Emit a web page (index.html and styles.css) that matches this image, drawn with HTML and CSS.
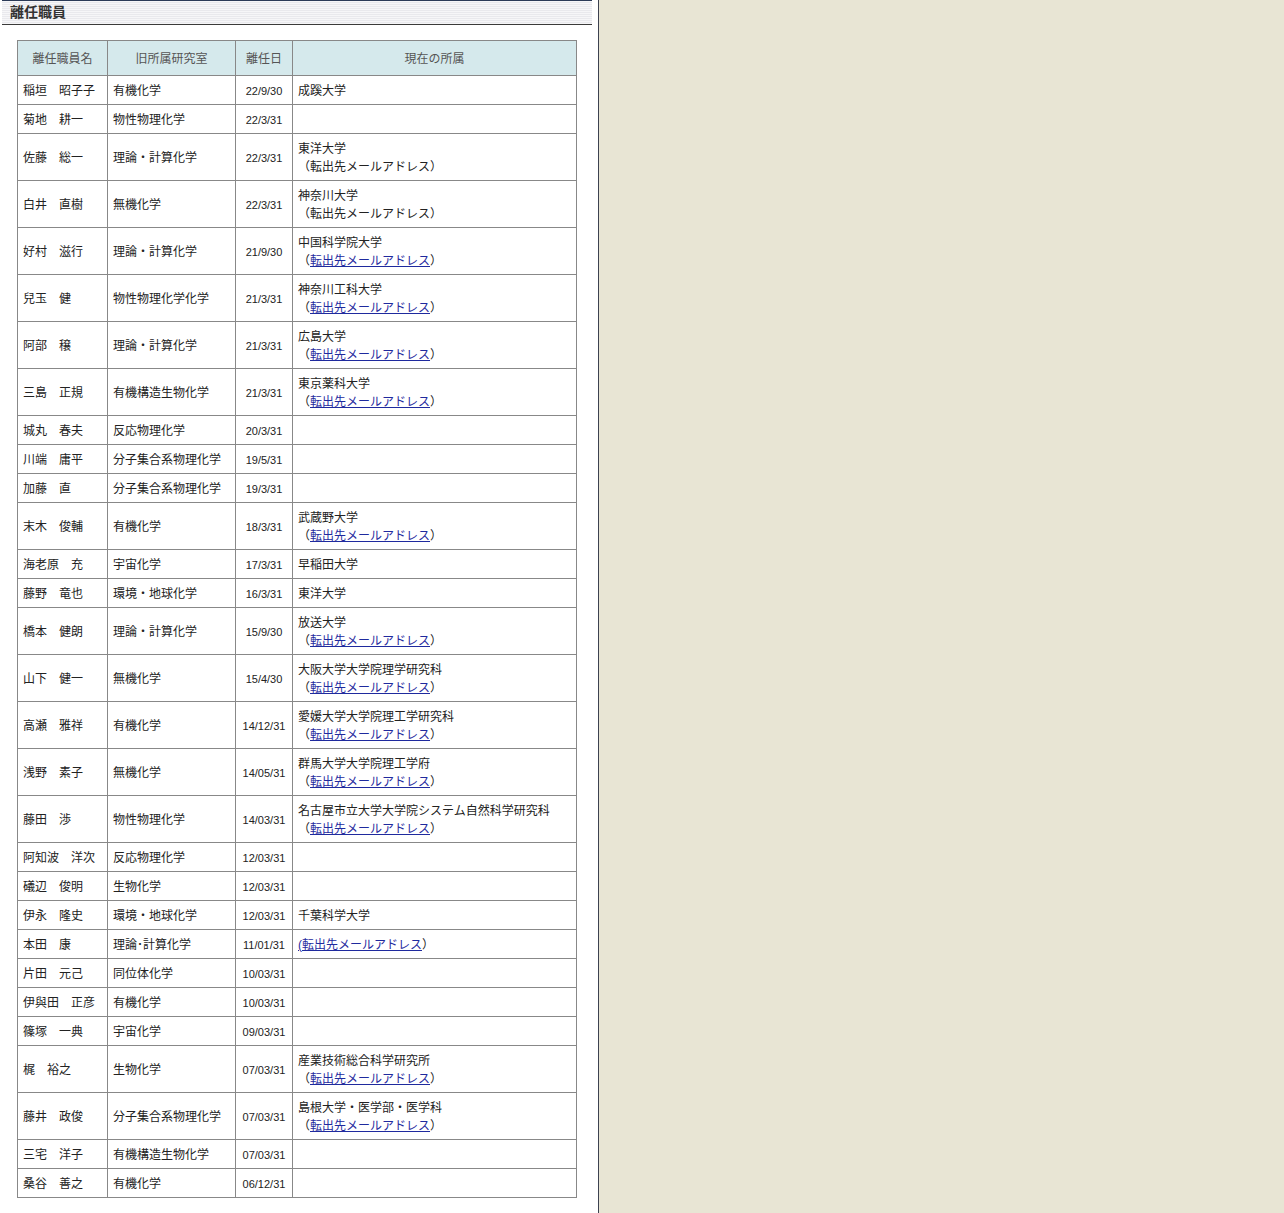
FILE: index.html
```html
<!DOCTYPE html>
<html lang="ja">
<head>
<meta charset="utf-8">
<title>離任職員</title>
<link rel="stylesheet" href="styles.css">
</head>
<body>
<div class="page">
  <main class="main">
    <h2 class="title">離任職員</h2>
    <table class="staff">
      <colgroup>
        <col class="c-name">
        <col class="c-lab">
        <col class="c-date">
        <col class="c-now">
      </colgroup>
      <thead>
        <tr><th>離任職員名</th><th>旧所属研究室</th><th>離任日</th><th>現在の所属</th></tr>
      </thead>
      <tbody>
        <tr><td>稲垣　昭子子</td><td>有機化学</td><td class="date">22/9/30</td><td>成蹊大学</td></tr>
        <tr><td>菊地　耕一</td><td>物性物理化学</td><td class="date">22/3/31</td><td></td></tr>
        <tr><td>佐藤　総一</td><td>理論・計算化学</td><td class="date">22/3/31</td><td>東洋大学<br>（転出先メールアドレス）</td></tr>
        <tr><td>白井　直樹</td><td>無機化学</td><td class="date">22/3/31</td><td>神奈川大学<br>（転出先メールアドレス）</td></tr>
        <tr><td>好村　滋行</td><td>理論・計算化学</td><td class="date">21/9/30</td><td>中国科学院大学<br>（<a href="#">転出先メールアドレス</a>）</td></tr>
        <tr><td>兒玉　健</td><td>物性物理化学化学</td><td class="date">21/3/31</td><td>神奈川工科大学<br>（<a href="#">転出先メールアドレス</a>）</td></tr>
        <tr><td>阿部　穣</td><td>理論・計算化学</td><td class="date">21/3/31</td><td>広島大学<br>（<a href="#">転出先メールアドレス</a>）</td></tr>
        <tr><td>三島　正規</td><td>有機構造生物化学</td><td class="date">21/3/31</td><td>東京薬科大学<br>（<a href="#">転出先メールアドレス</a>）</td></tr>
        <tr><td>城丸　春夫</td><td>反応物理化学</td><td class="date">20/3/31</td><td></td></tr>
        <tr><td>川端　庸平</td><td>分子集合系物理化学</td><td class="date">19/5/31</td><td></td></tr>
        <tr><td>加藤　直</td><td>分子集合系物理化学</td><td class="date">19/3/31</td><td></td></tr>
        <tr><td>末木　俊輔</td><td>有機化学</td><td class="date">18/3/31</td><td>武蔵野大学<br>（<a href="#">転出先メールアドレス</a>）</td></tr>
        <tr><td>海老原　充</td><td>宇宙化学</td><td class="date">17/3/31</td><td>早稲田大学</td></tr>
        <tr><td>藤野　竜也</td><td>環境・地球化学</td><td class="date">16/3/31</td><td>東洋大学</td></tr>
        <tr><td>橋本　健朗</td><td>理論・計算化学</td><td class="date">15/9/30</td><td>放送大学<br>（<a href="#">転出先メールアドレス</a>）</td></tr>
        <tr><td>山下　健一</td><td>無機化学</td><td class="date">15/4/30</td><td>大阪大学大学院理学研究科<br>（<a href="#">転出先メールアドレス</a>）</td></tr>
        <tr><td>高瀬　雅祥</td><td>有機化学</td><td class="date">14/12/31</td><td>愛媛大学大学院理工学研究科<br>（<a href="#">転出先メールアドレス</a>）</td></tr>
        <tr><td>浅野　素子</td><td>無機化学</td><td class="date">14/05/31</td><td>群馬大学大学院理工学府<br>（<a href="#">転出先メールアドレス</a>）</td></tr>
        <tr><td>藤田　渉</td><td>物性物理化学</td><td class="date">14/03/31</td><td>名古屋市立大学大学院システム自然科学研究科<br>（<a href="#">転出先メールアドレス</a>）</td></tr>
        <tr><td>阿知波　洋次</td><td>反応物理化学</td><td class="date">12/03/31</td><td></td></tr>
        <tr><td>礒辺　俊明</td><td>生物化学</td><td class="date">12/03/31</td><td></td></tr>
        <tr><td>伊永　隆史</td><td>環境・地球化学</td><td class="date">12/03/31</td><td>千葉科学大学</td></tr>
        <tr><td>本田　康</td><td>理論･計算化学</td><td class="date">11/01/31</td><td><a href="#">(転出先メールアドレス</a>）</td></tr>
        <tr><td>片田　元己</td><td>同位体化学</td><td class="date">10/03/31</td><td></td></tr>
        <tr><td>伊與田　正彦</td><td>有機化学</td><td class="date">10/03/31</td><td></td></tr>
        <tr><td>篠塚　一典</td><td>宇宙化学</td><td class="date">09/03/31</td><td></td></tr>
        <tr><td>梶　裕之</td><td>生物化学</td><td class="date">07/03/31</td><td>産業技術総合科学研究所<br>（<a href="#">転出先メールアドレス</a>）</td></tr>
        <tr><td>藤井　政俊</td><td>分子集合系物理化学</td><td class="date">07/03/31</td><td>島根大学・医学部・医学科<br>（<a href="#">転出先メールアドレス</a>）</td></tr>
        <tr><td>三宅　洋子</td><td>有機構造生物化学</td><td class="date">07/03/31</td><td></td></tr>
        <tr><td>桑谷　善之</td><td>有機化学</td><td class="date">06/12/31</td><td></td></tr>
      </tbody>
    </table>
  </main>
  <aside class="side"></aside>
</div>
</body>
</html>
```

FILE: styles.css
```css
html, body {
  margin: 0;
  padding: 0;
  height: 100%;
}

body {
  font-family: "Liberation Sans", "Noto Sans CJK JP", sans-serif;
  font-size: 12px;
  color: #222;
  background: #e8e5d4;
}

.page {
  display: flex;
  min-height: 100%;
}

.main {
  width: 598px;
  flex: none;
  background: #fff;
  border-right: 1px solid #3c4150;
  padding-bottom: 16px;
}

.side {
  flex: 1;
  background: #e8e5d4;
}

.title {
  margin: 0 6px 0 2px;
  height: 23px;
  padding-left: 8px;
  font-size: 14px;
  font-weight: bold;
  line-height: 23px;
  color: #333;
  border-top: 1px solid #2c3b58;
  border-bottom: 1px solid #3a3a3a;
  background: repeating-linear-gradient(to bottom, #f6f6f8 0, #f6f6f8 1px, #e9e9ed 1px, #e9e9ed 2px);
}

.staff {
  margin: 15px 0 0 17px;
  width: 559px;
  table-layout: fixed;
  border-collapse: collapse;
  border: 1px solid #888;
}

.c-name { width: 90px; }
.c-lab { width: 128px; }
.c-date { width: 57px; }
.c-now { width: 284px; }

.staff th,
.staff td {
  border: 1px solid #888;
  line-height: 18px;
  text-align: left;
  vertical-align: middle;
  white-space: nowrap;
}

.staff th {
  padding: 9px 5px 7px;
  font-weight: normal;
  text-align: center;
  color: #555;
  background: #d5e9ec;
}

.staff td {
  padding: 6px 5px 4px;
  height: 18px;
}

.staff td.date {
  text-align: center;
  font-size: 11px;
  padding-left: 0;
  padding-right: 0;
}

.staff a {
  color: #1f2a9e;
  text-decoration: underline;
}
```
